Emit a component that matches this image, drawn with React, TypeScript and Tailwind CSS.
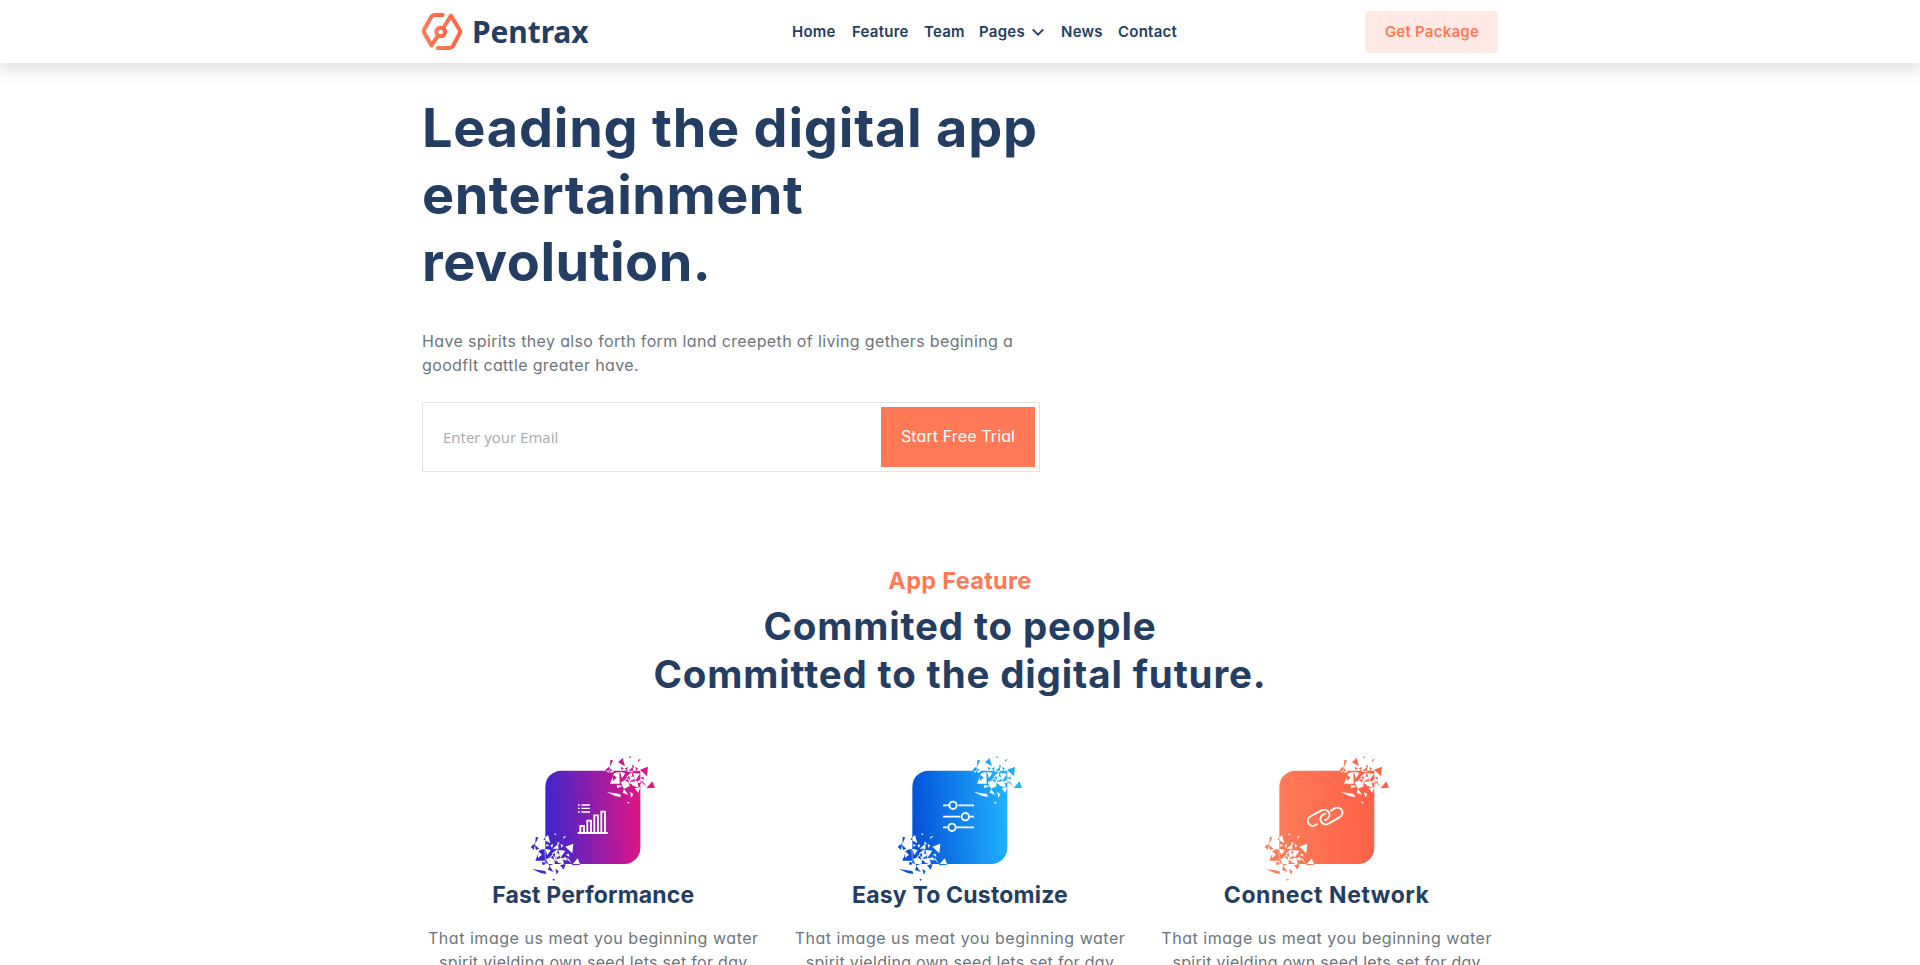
import type { ReactNode } from "react";

const SHARDS = [
  "300,52 314,39 321,64",
  "334,33 340,37 334,40",
  "360,44 369,42 360,51",
  "366,74 390,65 387,94",
  "385,130 403,109 411,128",
  "277,45 285,46 276,66",
  "262,75 275,64 272,84",
  "274,68 288,80 278,84",
  "328,80 344,66 346,80",
  "321,70 330,66 326,78",
  "276,116 289,84 304,81 305,116",
  "285,88 296,98 284,108",
  "266,141 306,147 309,156 292,153",
  "325,95 343,80 340,110",
  "306,80 322,84 312,100",
  "345,84 366,86 351,108",
  "308,112 330,101 335,124 318,131",
  "336,112 358,107 362,128 345,122",
  "350,130 367,126 361,143",
  "318,132 331,150 314,143",
  "336,140 346,148 340,158",
  "341,60 349,62 345,70",
  "327,170 335,172 331,177",
  "367,98 377,95 378,104",
  "368,107 376,110 385,125",
  "296,120 314,123 298,130",
  "320,104 334,92 338,118",
  "352,66 360,70 354,78",
  "308,66 318,70 310,74",
  "340,92 352,100 342,106",
  "356,112 366,104 372,116",
];

const toPath = (points: string, dx: number, dy: number) =>
  "M" +
  points
    .split(" ")
    .map((p) => {
      const [x, y] = p.split(",").map(Number);
      return `${x + dx} ${y + dy}`;
    })
    .join("L") +
  "Z";

const TILE = "M130 77H367V309A48 48 0 0 1 319 357H82V125A48 48 0 0 1 130 77Z";
const BURST =
  TILE + SHARDS.map((s) => toPath(s, 0, 0)).join("") + SHARDS.map((s) => toPath(s, -224, 231)).join("");

function FeatureIcon({ id, from, to, children }: { id: string; from: string; to: string; children: ReactNode }) {
  return (
    <svg viewBox="0 0 450 435" className="-mb-[9px] h-[145px] w-[150px]" fill="none">
      <defs>
        <linearGradient id={id} gradientUnits="userSpaceOnUse" x1="82" y1="230" x2="366" y2="210">
          <stop offset="0" stopColor={from} />
          <stop offset="1" stopColor={to} />
        </linearGradient>
      </defs>
      <path d={BURST} fill={`url(#${id})`} fillRule="evenodd" />
      <g stroke="#fff" strokeWidth="5.5">
        {children}
      </g>
    </svg>
  );
}

function Logo() {
  return (
    <svg viewBox="30 30 132 129" className="h-[43px] w-[44px]" fill="none">
      <defs>
        <linearGradient id="logo" x1="0" y1="0" x2="1" y2="0" gradientUnits="objectBoundingBox">
          <stop offset="0" stopColor="#ff7c57" />
          <stop offset="1" stopColor="#ff6147" />
        </linearGradient>
      </defs>
      <g stroke="url(#logo)" strokeWidth="12" strokeLinecap="round" strokeLinejoin="round">
        <path d="M98 45H73Q67 45 64 50L43 87Q40 93 43 99L64 136L84 107" />
        <path d="M100 84L123 47L149 90Q152 95 149 100L129 138Q125 144 119 144H83" />
        <circle cx="92" cy="96" r="13" />
      </g>
    </svg>
  );
}

const NAV = [
  { label: "Home", box: "w-[60px]" },
  { label: "Feature", box: "w-[72px]" },
  { label: "Team", box: "w-[55px]" },
  { label: "Pages", box: "w-[82px]", menu: true },
  { label: "News", box: "w-[57px]" },
  { label: "Contact", box: "w-[62px]" },
];

function Header() {
  return (
    <header className="relative z-10 h-[63px] bg-white shadow-[0_8px_15px_rgba(0,20,20,0.13)]">
      <div className="mx-auto flex h-full w-[1100px] items-center px-3">
        <a className="-ml-[2px] flex w-[372px] items-center">
          <Logo />
          <span className="ml-[8px] font-['Noto_Sans',sans-serif] text-[30px] leading-[40px] font-bold tracking-[-0.1px]">
            Pentrax
          </span>
        </a>
        <nav className="flex items-center text-[15px] leading-6 font-semibold tracking-[0.25px]">
          {NAV.map((item) => (
            <a key={item.label} className={`${item.box} flex items-center`}>
              {item.label}
              {item.menu && (
                <svg viewBox="0 0 14 8" className="ml-[6px] h-2 w-[14px]" fill="none">
                  <path d="M1.7 1.4L7 6.6L12.3 1.4" stroke="currentColor" strokeWidth="1.9" />
                </svg>
              )}
            </a>
          ))}
        </nav>
        <button className="ml-auto h-[42px] w-[133px] rounded bg-[#ffe9e4] pt-[2px] pl-[1px] text-[15px] font-semibold tracking-[0.25px] text-[#ff7956]">
          Get Package
        </button>
      </div>
    </header>
  );
}

function Hero() {
  return (
    <section className="mx-auto w-[1100px] px-3 pt-[31px]">
      <h1 className="text-[54px] leading-[67.2px] font-bold tracking-[0.5px]">
        <span className="tracking-[0.78px]">Leading the digital app</span>
        <br />
        entertainment
        <br />
        revolution.
      </h1>
      <p className="mt-[33px] text-base leading-6 tracking-[0.36px] text-[#6c757d] [font-feature-settings:'cv11']">
        Have spirits they also forth form land creepeth of living gethers begining a
        <br />
        goodflt cattle greater have.
      </p>
      <form className="mt-[25px] flex h-[70px] w-[618px] border border-[#e3e3e3] p-1">
        <input
          placeholder="Enter your Email"
          className="min-w-0 flex-1 pt-[2px] pl-4 font-['Open_Sans',sans-serif] text-[15px] outline-none placeholder:text-[#a9a9a9]"
        />
        <button
          type="button"
          className="h-[60px] w-[154px] bg-[#ff7956] pb-[2px] text-base tracking-[0.12px] text-white [font-feature-settings:'cv11']"
        >
          Start Free Trial
        </button>
      </form>
    </section>
  );
}

const Copy = () => (
  <p className="mt-[16px] text-center text-base leading-6 whitespace-nowrap text-[#6c757d] [font-feature-settings:'cv11']">
    <span className="tracking-[0.53px]">That image us meat you beginning water</span>
    <br />
    <span className="tracking-[0.3px]">spirit yielding own seed lets set for day</span>
  </p>
);

const TITLE = "text-[23px] leading-[29px] font-bold";

function Features() {
  return (
    <section className="mx-auto w-[1100px] pt-[94px] text-center">
      <h5 className="text-[23.5px] leading-[29px] font-bold tracking-[0.3px] text-[#ff7956]">App Feature</h5>
      <h2 className="mt-[7px] text-[38.5px] leading-[48px] font-bold tracking-[0.85px]">
        Commited to people
        <br />
        Committed to the digital future.
      </h2>
      <div className="mt-[47px] grid grid-cols-3">
        <div className="flex flex-col items-center">
          <FeatureIcon id="performance" from="#3b25cf" to="#e01585">
            <path d="M179 264H269M187 264V243H198V264M208 264V227H219V264M229 264V211H240V264M250 264V200H261V264" />
            <path d="M190 180H216M190 190H216M190 201H216M180 180H185M180 190H185M180 201H185" strokeWidth="4" />
          </FeatureIcon>
          <h4 className={`${TITLE} tracking-[0.15px]`}>Fast Performance</h4>
          <Copy />
        </div>
        <div className="flex flex-col items-center">
          <FeatureIcon id="customize" from="#0450d8" to="#1fb2ff">
            <path d="M174 181H193M220 181H267M174 215H226M253 215H267M174 247H188M214 247H267" />
            <circle cx="204" cy="181" r="11" />
            <circle cx="241" cy="215" r="11" />
            <circle cx="201" cy="247" r="11" />
          </FeatureIcon>
          <h4 className={`${TITLE} tracking-[0.18px]`}>Easy To Customize</h4>
          <Copy />
        </div>
        <div className="flex flex-col items-center">
          <FeatureIcon id="network" from="#ff7b57" to="#ff6147">
            <g strokeLinecap="round">
              <path d="M196 237L189 241C170 249 158 223 177 213L209 196C229 187 242 213 224 223L219 226" />
              <path d="M237 197L246 191C268 180 282 206 262 217L231 235C210 246 195 220 213 209L220 206" />
            </g>
          </FeatureIcon>
          <h4 className={`${TITLE} tracking-[0.55px]`}>Connect Network</h4>
          <Copy />
        </div>
      </div>
    </section>
  );
}

export default function App() {
  return (
    <div className="h-[965px] overflow-hidden bg-white font-[Inter,sans-serif] text-[#233d63]">
      <Header />
      <Hero />
      <Features />
    </div>
  );
}
